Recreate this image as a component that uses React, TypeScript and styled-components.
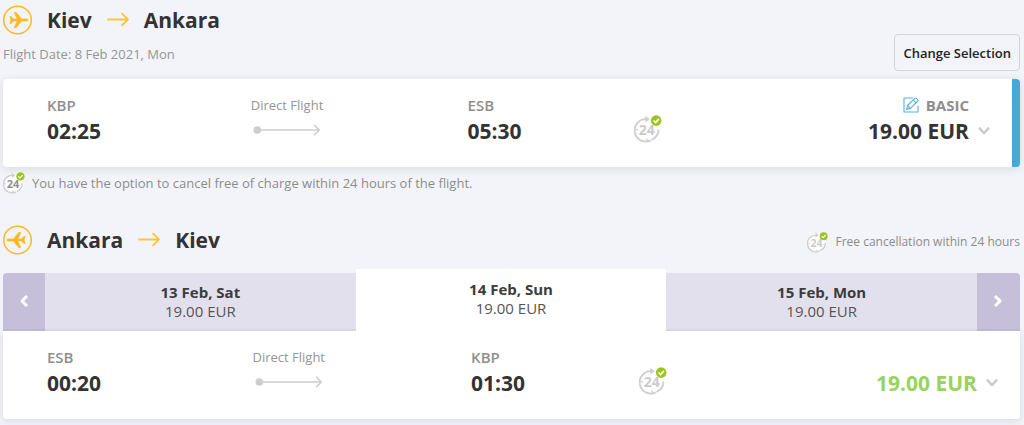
import React from "react";
import styled, { createGlobalStyle } from "styled-components";

const GlobalStyle = createGlobalStyle`
  *, *::before, *::after { box-sizing: border-box; }
  body {
    margin: 0;
    background: #f3f4f9;
    color: #333;
    font-family: "Open Sans", "Noto Sans", sans-serif;
  }
  button { font-family: inherit; cursor: pointer; }
  svg { display: block; flex: none; }
`;

const Page = styled.main`
  padding: 3px 4px 6px 3px;
`;

const SectionHead = styled.header<{ $align: string; $gap: number }>`
  display: flex;
  justify-content: space-between;
  align-items: ${(p) => p.$align};
  padding-bottom: ${(p) => p.$gap}px;
`;

const RouteTitle = styled.h2`
  display: flex;
  align-items: center;
  gap: 15px;
  margin: 0;
  font-size: 21px;
  line-height: 34px;
  font-weight: 700;
`;

const FlightDate = styled.p`
  margin: 7px 0;
  font-size: 13px;
  line-height: 20px;
  color: #959595;
`;

const OutlineButton = styled.button`
  height: 37px;
  padding: 0 8px;
  border: 1px solid #d3d4d7;
  border-radius: 4px;
  background: transparent;
  color: #222;
  font-size: 13px;
  font-weight: 600;
`;

const FlightCard = styled.article<{ $selected?: boolean }>`
  display: grid;
  grid-template-columns: 204fr 217fr 167fr 100fr 256fr;
  height: 88px;
  padding: 16px 22px 0 44px;
  background: #fff;
  border-radius: ${(p) => (p.$selected ? "4px" : "0 0 4px 4px")};
  border-right: ${(p) => (p.$selected ? "8px solid #48a9d3" : "0")};
  box-shadow: 0 2px 10px rgba(60, 65, 90, 0.14);
`;

const AirportCode = styled.div`
  font-size: 15px;
  line-height: 20px;
  font-weight: 600;
  color: #8f8f8f;
`;

const Time = styled.time`
  display: block;
  font-size: 21px;
  line-height: 32px;
  font-weight: 700;
`;

const Path = styled.div`
  display: flex;
  flex-direction: column;
  gap: 9px;
  font-size: 13px;
  line-height: 20px;
  color: #959595;
`;

const Badge = styled.div`
  padding-top: 20px;
`;

const Fare = styled.div`
  display: grid;
  grid-template-columns: auto 12px;
  grid-template-rows: 20px 32px;
  column-gap: 9px;
  justify-content: end;
  justify-items: end;
  align-items: center;
  align-content: start;
`;

const FareClass = styled.div`
  display: flex;
  align-items: center;
  gap: 7px;
  font-size: 15px;
  line-height: 20px;
  font-weight: 700;
  color: #8f8f8f;
`;

const Price = styled.strong<{ $offer?: boolean }>`
  grid-area: 2 / 1;
  font-size: 21px;
  line-height: 32px;
  font-weight: 700;
  color: ${(p) => (p.$offer ? "#98d35c" : "#333")};
`;

const ExpandButton = styled.button`
  grid-area: 2 / 2;
  padding: 0;
  border: 0;
  background: none;
`;

const Note = styled.p<{ $small?: boolean }>`
  display: flex;
  align-items: center;
  gap: 7px;
  margin: 0;
  padding-top: ${(p) => (p.$small ? 4 : 0)}px;
  font-size: ${(p) => (p.$small ? 12 : 13)}px;
  line-height: 22px;
  color: #8c8c8c;
`;

const NoteRow = styled.div`
  padding: 5px 0 29px;
`;

const DateBar = styled.nav`
  display: grid;
  grid-template-columns: 42px 1fr 1fr 1fr 43px;
  height: 58px;
`;

const PageButton = styled.button<{ $side: "left" | "right" }>`
  display: grid;
  place-items: center;
  padding: 0;
  border: 0;
  border-bottom: 2px solid #beb7d3;
  border-radius: ${(p) => (p.$side === "left" ? "4px 0 0 0" : "0 4px 0 0")};
  background: #c5bfda;
`;

const DateTab = styled.button<{ $current?: boolean }>`
  margin: ${(p) => (p.$current ? "-4px 0 0" : "0")};
  padding: 2px 0 0;
  border: 0;
  border-bottom: ${(p) => (p.$current ? "4px solid #fff" : "2px solid #d8d5e3")};
  background: ${(p) => (p.$current ? "#fff" : "#e3e0ee")};
  color: #3c3c3c;
  font-size: 15px;
  line-height: 19px;
`;

const TabDate = styled.span`
  display: block;
  font-weight: 700;
`;

const TabPrice = styled.span`
  display: block;
  color: #555;
`;

const PlaneIcon = ({ back }: { back?: boolean }) => (
  <svg width="29" height="32" viewBox="0 0 29 32" aria-hidden="true">
    <circle cx="14.5" cy="16" r="13.8" fill="none" stroke="#fdb924" strokeWidth="1.5" />
    <path
      transform={back ? "translate(29 0) scale(-1 1)" : undefined}
      fill="#fdb924"
      stroke="#fdb924"
      strokeWidth=".6"
      strokeLinejoin="round"
      d="M6.8 12.5h1.4l2.3 2.5h3.7L11.2 8.3h1.9l5.6 6.6h4.1c1.4 0 2.5.5 2.5 1.1s-1.1 1.1-2.5 1.1h-4.1l-5.6 6.6h-1.9l3-6.7h-3.7l-2.3 2.5H6.8l1.1-3.5z"
    />
  </svg>
);

const RouteArrow = () => (
  <svg width="22" height="16" viewBox="0 0 22 16" fill="none" stroke="#fec43c" strokeWidth="1.8" strokeLinecap="round" strokeLinejoin="round" aria-hidden="true">
    <path d="M1 7.5h20M15 1.7l6 5.8-6 5.8" />
  </svg>
);

const PathArrow = () => (
  <svg width="72" height="12" viewBox="0 0 72 12" fill="none" stroke="#cdcdcd" strokeWidth="1.5" aria-hidden="true">
    <circle cx="6.3" cy="6" r="3.8" fill="#cdcdcd" stroke="none" />
    <path d="M8 6h60M63 .8 68.3 6 63 11.2" />
  </svg>
);

const Cancel24Icon = ({ size, dark, halo }: { size: number; dark?: boolean; halo?: boolean }) => (
  <svg width={size} height={size} viewBox="0 0 28 28" role="img" aria-label="Free cancellation">
    {halo && <circle cx="13" cy="15" r="13" fill="#fff" />}
    <path d="M17.5 24.9A11.2 11.2 0 0 0 24.2 17.6V14.4M16.8 25.4A11.2 11.2 0 1 1 12.8 4.2" fill="none" stroke="#cfcfcf" strokeWidth="1.9" />
    <path d="M11.3 .8 15.8 4.2l-4.5 3.2zM12.3 23.5h1.4v2.6h-1.4zM1.7 14.2h2.4v1.4H1.7z" fill="#cfcfcf" />
    <text x="12.8" y="19.8" textAnchor="middle" fontSize="14" fontWeight="700" fill={dark ? "#909090" : "#cbcbcb"}>24</text>
    <circle cx="22.2" cy="5.6" r="5.3" fill="#9dc41c" />
    <path d="m19.6 5.5 2 2 3.4-3.6" fill="none" stroke="#fff" strokeWidth="1.6" />
  </svg>
);

const EditIcon = () => (
  <svg width="16" height="16" viewBox="0 0 16 16" fill="none" stroke="#55afe0" strokeWidth="1.1" strokeLinejoin="round" aria-hidden="true">
    <path d="M10 1H1v14h14V8.5" />
    <path d="m3.6 12.4 1-3.9L11.8 1.3q.7-.7 1.4 0l1.5 1.5q.7.7 0 1.4L7.5 11.4zM10.2 2.9l2.9 2.9M4.6 8.5l2.9 2.9" />
  </svg>
);

const ChevronDown = () => (
  <svg width="12" height="12" viewBox="0 0 12 12" fill="none" stroke="#ccc" strokeWidth="2.6" strokeLinecap="round" strokeLinejoin="round" aria-hidden="true">
    <path d="m1.7 3.5 4.3 4.6 4.3-4.6" />
  </svg>
);

const PageChevron = ({ side }: { side: "left" | "right" }) => (
  <svg width="10" height="14" viewBox="0 0 10 14" fill="none" stroke="#fff" strokeWidth="3" strokeLinejoin="round" aria-hidden="true">
    <path d={side === "left" ? "M8 2 3 7l5 5" : "m2 2 5 5-5 5"} />
  </svg>
);

const Stop = ({ code, time }: { code: string; time: string }) => (
  <div>
    <AirportCode>{code}</AirportCode>
    <Time>{time}</Time>
  </div>
);

type FlightProps = {
  from: [string, string];
  to: [string, string];
  price: string;
  fareClass?: string;
};

const Flight = ({ from, to, price, fareClass }: FlightProps) => (
  <FlightCard $selected={!!fareClass}>
    <Stop code={from[0]} time={from[1]} />
    <Path>
      Direct Flight
      <PathArrow />
    </Path>
    <Stop code={to[0]} time={to[1]} />
    <Badge>
      <Cancel24Icon size={28} />
    </Badge>
    <Fare>
      {fareClass && (
        <FareClass>
          <EditIcon />
          {fareClass}
        </FareClass>
      )}
      <Price $offer={!fareClass}>{price}</Price>
      <ExpandButton aria-label="Show fare details">
        <ChevronDown />
      </ExpandButton>
    </Fare>
  </FlightCard>
);

const Route = ({ from, to, back }: { from: string; to: string; back?: boolean }) => (
  <RouteTitle>
    <PlaneIcon back={back} />
    {from}
    <RouteArrow />
    {to}
  </RouteTitle>
);

const dates = [
  { day: "13 Feb, Sat", price: "19.00 EUR" },
  { day: "14 Feb, Sun", price: "19.00 EUR", current: true },
  { day: "15 Feb, Mon", price: "19.00 EUR" },
];

export default function App() {
  return (
    <>
      <GlobalStyle />
      <Page>
        <section>
          <SectionHead $align="flex-end" $gap={8}>
            <div>
              <Route from="Kiev" to="Ankara" />
              <FlightDate>Flight Date: 8 Feb 2021, Mon</FlightDate>
            </div>
            <OutlineButton>Change Selection</OutlineButton>
          </SectionHead>
          <Flight from={["KBP", "02:25"]} to={["ESB", "05:30"]} price="19.00 EUR" fareClass="BASIC" />
          <NoteRow>
            <Note>
              <Cancel24Icon size={22} dark halo />
              You have the option to cancel free of charge within 24 hours of the flight.
            </Note>
          </NoteRow>
        </section>
        <section>
          <SectionHead $align="center" $gap={16}>
            <Route from="Ankara" to="Kiev" back />
            <Note $small>
              <Cancel24Icon size={21} halo />
              Free cancellation within 24 hours
            </Note>
          </SectionHead>
          <DateBar aria-label="Return dates">
            <PageButton $side="left" aria-label="Earlier dates">
              <PageChevron side="left" />
            </PageButton>
            {dates.map((d) => (
              <DateTab key={d.day} $current={d.current}>
                <TabDate>{d.day}</TabDate>
                <TabPrice>{d.price}</TabPrice>
              </DateTab>
            ))}
            <PageButton $side="right" aria-label="Later dates">
              <PageChevron side="right" />
            </PageButton>
          </DateBar>
          <Flight from={["ESB", "00:20"]} to={["KBP", "01:30"]} price="19.00 EUR" />
        </section>
      </Page>
    </>
  );
}
